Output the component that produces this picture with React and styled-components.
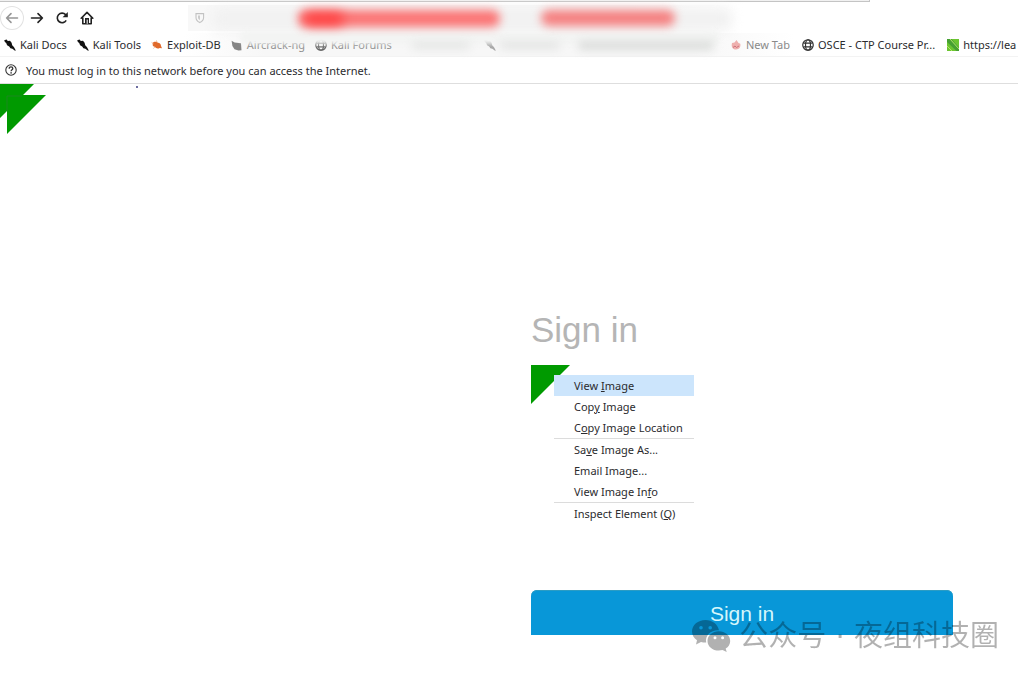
import React from 'react'
import styled, { createGlobalStyle } from 'styled-components'

const GlobalStyle = createGlobalStyle`
* {
  box-sizing: border-box;
}
body {
  margin: 0;
  background: #fff;
  overflow: hidden;
  font-family: "Noto Sans", "Noto Sans CJK SC", sans-serif;
  font-size: 11px;
  color: #2b2b2e;
}
button, input {
  font: inherit;
  color: inherit;
  border: 0;
  background: none;
  padding: 0;
  margin: 0;
}
`

const ArrowIcon = ({ flip }) => (
  <svg width="14" height="14" viewBox="0 0 14 14" fill="none" stroke="currentColor" strokeWidth="1.6" strokeLinecap="round" strokeLinejoin="round">
    <path d={flip ? 'M12.5 7H1.6M6 2.6L1.6 7 6 11.4' : 'M1.5 7h10.9M8 2.6L12.4 7 8 11.4'} />
  </svg>
)

const ReloadIcon = () => (
  <svg width="14" height="14" viewBox="0 0 14 14" fill="none" stroke="currentColor" strokeWidth="1.6">
    <path d="M11.2 9.4A4.8 4.8 0 1 1 10.6 3.6L12 5" />
    <path d="M12.8 1v5.2H7.6z" fill="currentColor" stroke="none" />
  </svg>
)

const HomeIcon = () => (
  <svg width="14" height="14" viewBox="0 0 14 14" fill="none" stroke="currentColor" strokeWidth="1.6" strokeLinejoin="round" strokeLinecap="round">
    <path d="M1.2 7.2L7 1.4l5.8 5.8M2.8 6.4v6.4h8.4V6.4" />
    <path d="M5 12.5V7h4v5.5z" fill="currentColor" stroke="none" />
    <path d="M7.2 9v3.4" stroke="#fff" strokeWidth="1" />
  </svg>
)

const ShieldIcon = () => (
  <svg width="10" height="12" viewBox="0 0 10 12" fill="none" stroke="#c2c2c2" strokeWidth="1.1">
    <path d="M1 1.6h7.6v4c0 2.5-1.6 4-3.8 5C2.6 9.6 1 8.1 1 5.6z" />
    <path d="M3 3.5h2v4.8C3.7 7.5 3 6.8 3 5.6z" fill="#cccccc" stroke="none" />
  </svg>
)

const KaliIcon = ({ color = '#111' }) => (
  <svg width="12" height="12" viewBox="0 0 12 12">
    <path d="M.2 1.2L2.6.4l1.2 1.5 2.2-.1 1.6 2 .6 2.4 1.7 1.7 1.9 3.5-.8.4-2.6-2-2-.6-1.2-1.8-2.1-1.2L2.2 4 .9 3z" fill={color} />
  </svg>
)

const ExploitIcon = () => (
  <svg width="12" height="12" viewBox="0 0 12 12">
    <path d="M1.6 4.4C2.8 2.4 5.4 2.5 7 3.8c1.7.2 3.1 1.5 3 3.1l1 2.3-2.3-.3c-1.5 1.2-3.9.7-4.7-.8L1.9 7z" fill="#e0692a" />
    <path d="M.6 3.4l2 1.4M5.5 1.5l.5 2M2.4 9.4l1.5-1.4" stroke="#eda37a" strokeWidth=".8" />
  </svg>
)

const AircrackIcon = () => (
  <svg width="12" height="12" viewBox="0 0 12 12">
    <path d="M.6 1.8l3 1.6 6.4.8.5 7-3 .4-4-1.4L1.4 7z" fill="#858585" />
  </svg>
)

const GlobeIcon = ({ color = '#333' }) => (
  <svg width="12" height="12" viewBox="0 0 13 13" fill="none" stroke={color} strokeWidth="1.3">
    <circle cx="6.5" cy="6.5" r="5.7" />
    <ellipse cx="6.5" cy="6.5" rx="2.7" ry="5.6" />
    <path d="M1.5 4.5h10M1.5 8.6h10" />
  </svg>
)

const FlameIcon = () => (
  <svg width="12" height="12" viewBox="0 0 12 12">
    <path d="M2 4l2.5-.5L6.5 1l2 3 1.8.8c.6 3.4-1 5.7-4.3 5.7S1 8 2 4z" fill="#eeb0ae" />
    <path d="M3 8.5l2-1.5 1.5 1.5L9 7" stroke="#d0727b" fill="none" />
  </svg>
)

const LeafIcon = () => (
  <svg width="12" height="12" viewBox="0 0 12 12">
    <path d="M0 0h12v12H0z" fill="#6cc531" />
    <path d="M0 0h4.5L12 8.5V12H9.5L0 3z" fill="#46a033" />
    <path d="M3 0l9 10M0 7l5 5" stroke="#b4e26a" strokeWidth="1" />
  </svg>
)

const HelpIcon = () => (
  <svg width="12" height="12" viewBox="0 0 12 12" fill="none" stroke="#333" strokeWidth="1.1">
    <circle cx="6" cy="6" r="5.2" />
    <path d="M4.2 4.7c0-1.2.8-1.8 1.8-1.8s1.8.7 1.8 1.6c0 1.2-1.7 1.3-1.7 2.7" strokeWidth="1.3" />
    <circle cx="6.1" cy="8.9" r=".8" fill="#333" stroke="none" />
  </svg>
)

const WechatIcon = () => (
  <svg width="40" height="34" viewBox="0 0 40 34">
    <path fillRule="evenodd" d="M14.5 1C6.9 1 1 6 1 12.5c0 3.6 1.9 6.7 5 8.8L5 25.5l5-2.5c1.5.4 2.8.6 4.4.6h.8C13.8 16.5 20 10.8 28 11.3 26.6 5.2 21.3 1 14.5 1zM10 7a1.8 1.8 0 1 1 0 3.6A1.8 1.8 0 0 1 10 7zm9.2 0a1.8 1.8 0 1 1 0 3.6 1.8 1.8 0 0 1 0-3.6z" />
    <path fillRule="evenodd" d="M27.8 12.3c-6.4 0-11.3 4.3-11.3 9.6s4.9 9.7 11.3 9.7c1.3 0 2.6-.2 3.7-.5l4.2 2-1-3.5c2.7-1.7 4.5-4.5 4.5-7.7 0-5.3-5-9.6-11.4-9.6zM24 17.2a1.5 1.5 0 1 1 0 3 1.5 1.5 0 0 1 0-3zm7.6 0a1.5 1.5 0 1 1 0 3 1.5 1.5 0 0 1 0-3z" />
  </svg>
)

const bookmarks = [
  { label: 'Kali Docs', icon: <KaliIcon /> },
  { label: 'Kali Tools', icon: <KaliIcon /> },
  { label: 'Exploit-DB', icon: <ExploitIcon /> },
  { label: 'Aircrack-ng', icon: <AircrackIcon />, tone: '#909090' },
  { label: 'Kali Forums', icon: <GlobeIcon color="#666" />, tone: '#909090' }
]

const rightBookmarks = [
  { label: 'New Tab', icon: <FlameIcon />, tone: '#8a8a8a' },
  { label: 'OSCE - CTP Course Pr...', icon: <GlobeIcon /> },
  { label: 'https://lea', icon: <LeafIcon /> }
]

const menuGroups = [
  [['View ', 'I', 'mage'], ['Cop', 'y', ' Image'], ['C', 'o', 'py Image Location']],
  [['Sa', 'v', 'e Image As...'], ['Email Ima', 'g', 'e...'], ['View Image In', 'f', 'o']],
  [['Inspect Element (', 'Q', ')']]
]

const BookmarkList = ({ items }) => (
  <Bookmarks>
    {items.map((item) => (
      <Bookmark key={item.label} href="#" $tone={item.tone}>
        {item.icon}
        {item.label}
      </Bookmark>
    ))}
  </Bookmarks>
)

const ContextMenu = () => (
  <Menu>
    {menuGroups.map((group, i) => (
      <MenuGroup key={i}>
        {group.map(([before, accessKey, after], j) => (
          <li key={j}>
            <MenuItem type="button" $active={i === 0 && j === 0}>
              {before}<u>{accessKey}</u>{after}
            </MenuItem>
          </li>
        ))}
      </MenuGroup>
    ))}
  </Menu>
)

const App = () => {
  return (
    <Page>
      <GlobalStyle />
      <Chrome>
        <TabStrip />
        <Toolbar>
          <NavButton type="button" aria-label="Back" $round><ArrowIcon flip /></NavButton>
          <NavButton type="button" aria-label="Forward"><ArrowIcon /></NavButton>
          <NavButton type="button" aria-label="Reload"><ReloadIcon /></NavButton>
          <NavButton type="button" aria-label="Home"><HomeIcon /></NavButton>
          <AddressBar>
            <ShieldIcon />
            <input type="text" aria-label="Address" />
          </AddressBar>
        </Toolbar>
        <BookmarkBar>
          <BookmarkList items={bookmarks} />
          <HiddenBookmark><KaliIcon color="#a5a5a5" /></HiddenBookmark>
          <BookmarkList items={rightBookmarks} />
        </BookmarkBar>
        <Smudge $left="212px" $top="8px" $width="520px" $height="22px" $color="#f1f1f1" $blur="6px" />
        <Smudge $left="240px" $top="30px" $width="480px" $height="14px" $color="#f3f4f3" $blur="2px" />
        <Smudge $left="412px" $top="42px" $width="58px" $height="7px" $color="#e4e5e4" $blur="4px" />
        <Smudge $left="500px" $top="42px" $width="60px" $height="7px" $color="#e2e3e2" $blur="4px" />
        <Smudge $left="578px" $top="41px" $width="136px" $height="9px" $color="#dbdddb" $blur="4px" />
        <Smudge $left="298px" $top="10px" $width="202px" $height="17px" $color="#fb7474" $blur="5px" />
        <Smudge $left="304px" $top="13px" $width="40px" $height="12px" $color="#ff3c3c" $blur="6px" />
        <Smudge $left="541px" $top="10px" $width="134px" $height="16px" $color="#f58080" $blur="5px" />
        <Notice>
          <HelpIcon />
          You must log in to this network before you can access the Internet.
        </Notice>
      </Chrome>
      <Content>
        <Corner width="150" height="52" viewBox="0 0 150 52">
          <path d="M0 0h34L23 11h23L7 50V27l-7 7z" fill="#009a00" />
          <path d="M7 27V12h15" stroke="#2c7d33" strokeWidth=".6" fill="none" />
          <circle cx="137" cy="3" r="1" fill="#3d3d80" />
        </Corner>
        <Form>
          <Title>Sign in</Title>
          <Picture>
            <svg width="40" height="40" viewBox="0 0 40 40">
              <path d="M0 0h39L0 39z" fill="#009a00" />
            </svg>
            <ContextMenu />
          </Picture>
          <Submit type="button">Sign in</Submit>
        </Form>
      </Content>
      <Watermark>
        <WechatIcon />
        <span>公众号 · 夜组科技圈</span>
      </Watermark>
    </Page>
  )
}

const Page = styled.div`
  position: relative;
  min-height: 100vh;
  padding-right: 13px;
`

const Chrome = styled.header`
  position: relative;
  overflow: hidden;
  border-bottom: 1px solid #dedede;
`

const TabStrip = styled.div`
  width: 870px;
  height: 2px;
  background: #f1f1f1;
  border-bottom: 1px solid #c4c4c4;
  border-right: 1px solid #c4c4c4;
`

const Toolbar = styled.nav`
  display: flex;
  align-items: center;
  height: 31px;
`

const NavButton = styled.button`
  display: flex;
  align-items: center;
  justify-content: center;
  width: ${({ $round }) => ($round ? '24px' : '25px')};
  height: 24px;
  border-radius: 50%;
  color: ${({ $round }) => ($round ? '#969696' : '#222')};
  box-shadow: ${({ $round }) => ($round ? 'inset 0 0 0 1px #e2e2e2' : 'none')};
`

const AddressBar = styled.label`
  display: flex;
  align-items: center;
  width: 550px;
  height: 26px;
  margin-left: 89px;
  padding-left: 7px;
  background: linear-gradient(to right, #f8f8f8 80%, #fff);

  input {
    flex: 1;
    outline: 0;
  }
`

const BookmarkBar = styled.div`
  display: flex;
  height: 24px;
  padding-left: 4px;
  background: linear-gradient(to right, #fff 18%, #f7f7f7 26%, #f7f7f7 68%, #fff 78%);
  border-bottom: 1px solid #f3f3f3;
`

const Bookmarks = styled.div`
  display: flex;
  align-items: center;
  gap: 10px;

  &:last-child {
    gap: 12px;
    width: 288px;
    margin-left: auto;
    overflow: hidden;
  }
`

const HiddenBookmark = styled.span`
  display: flex;
  align-items: center;
  margin-left: 92px;
`

const Bookmark = styled.a`
  display: flex;
  align-items: center;
  flex-shrink: 0;
  gap: 4px;
  white-space: nowrap;
  text-decoration: none;
  color: ${({ $tone }) => $tone || '#2b2b2e'};
`

const Smudge = styled.span`
  position: absolute;
  left: ${({ $left }) => $left};
  top: ${({ $top }) => $top};
  width: ${({ $width }) => $width};
  height: ${({ $height }) => $height};
  border-radius: 8px;
  background: ${({ $color }) => $color};
  filter: blur(${({ $blur }) => $blur});
  pointer-events: none;
`

const Notice = styled.div`
  display: flex;
  align-items: center;
  gap: 9px;
  height: 26px;
  padding-left: 5px;
`

const Content = styled.main`
  position: relative;
`

const Corner = styled.svg`
  position: absolute;
  top: 0;
  left: 0;
`

const Form = styled.form`
  display: flex;
  flex-direction: column;
  width: 422px;
  margin-left: 531px;
  padding-top: 226px;
  font-family: "Liberation Sans", Arial, sans-serif;
`

const Title = styled.h1`
  margin: 0 0 15px;
  font-size: 35px;
  line-height: 40px;
  font-weight: 400;
  color: #b5b5b5;
`

const Picture = styled.div`
  position: relative;
  height: 225px;
`

const Menu = styled.div`
  position: absolute;
  top: 10px;
  left: 23px;
  width: 140px;
  background: #fff;
  font-family: "Noto Sans", sans-serif;
`

const MenuGroup = styled.ul`
  list-style: none;
  margin: 0;
  padding: 0;

  & + & {
    border-top: 1px solid #dcdcdc;
  }
`

const MenuItem = styled.button`
  display: block;
  width: 100%;
  height: 21px;
  padding-left: 20px;
  text-align: left;
  white-space: nowrap;
  background: ${({ $active }) => ($active ? '#cce5fc' : 'transparent')};

  u {
    text-underline-offset: 1px;
  }
`

const Submit = styled.button`
  height: 45px;
  padding-top: 3px;
  border-radius: 6px 6px 0 0;
  background: #0897d8;
  box-shadow: inset 0 1px 0 #2b9cc4;
  font-size: 21px;
  color: #d5f6fb;
`

const Watermark = styled.div`
  position: absolute;
  right: 32px;
  bottom: 24px;
  display: flex;
  align-items: center;
  gap: 8px;
  font-family: "DejaVu Sans", "Noto Sans CJK SC", sans-serif;
  font-size: 29px;
  line-height: 34px;
  white-space: nowrap;
  color: #000;
  fill: #000;
  opacity: 0.3;
`

export default App
